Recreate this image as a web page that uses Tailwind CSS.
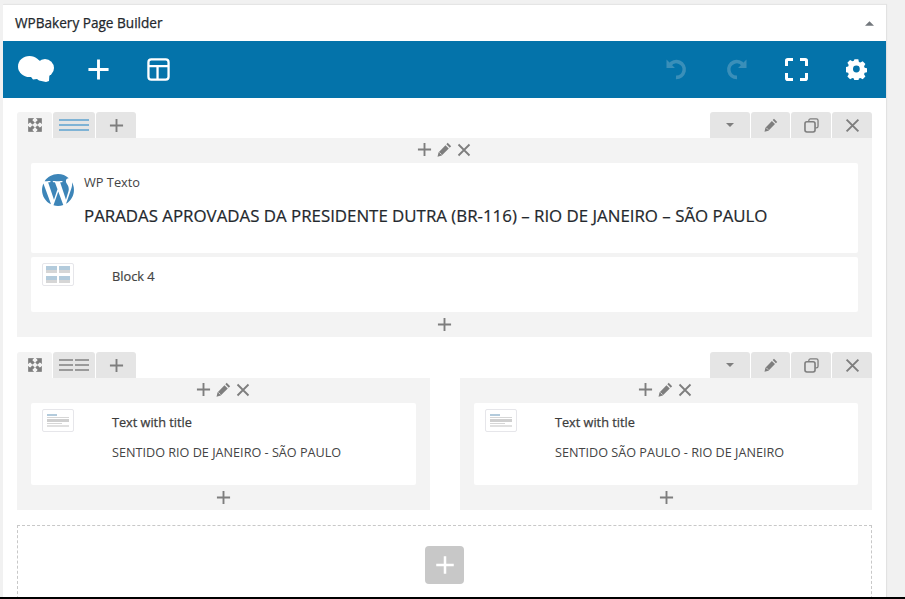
<!DOCTYPE html>
<html lang="en">
<head>
  <meta charset="UTF-8">
  <title>WPBakery Page Builder</title>
  <script src="https://cdn.jsdelivr.net/npm/@tailwindcss/browser@4"></script>
</head>
<body class="bg-[#f1f1f1] font-['Open_Sans','Noto_Sans',sans-serif] text-[#444]">
  <svg class="hidden">
    <symbol id="plus" viewBox="0 0 16 16"><path d="M8 1v14M1 8h14" fill="none" stroke="currentColor" stroke-width="2"/></symbol>
    <symbol id="cross" viewBox="0 0 14 14"><path d="M1.500 1.500l11 11M12.500 1.500l-11 11" fill="none" stroke="currentColor" stroke-width="1.800"/></symbol>
    <symbol id="pencil" viewBox="0 0 14 14"><path d="M10 .8l3.200 3.200-1.300 1.300-3.200-3.200zM7.900 3l3.100 3.100-6.600 6.600-3.900 1 .9-4z" fill="currentColor"/><path d="M2.300 9.800l1.900 1.900" stroke="#e5e5e5" stroke-width=".8"/></symbol>
    <symbol id="expand" viewBox="0 0 14 14"><path d="M.5.500h5L3.900 2.100 6.300 4.500 4.500 6.300 2.100 3.900.5 5.500zM13.500.500v5l-1.600-1.600L9.500 6.300 7.700 4.500l2.400-2.400L8.500.500zM.5 13.500v-5l1.600 1.600 2.400-2.400 1.800 1.800-2.400 2.400 1.600 1.600zM13.500 13.500h-5l1.600-1.600-2.400-2.400 1.800-1.800 2.400 2.400 1.600-1.600z" fill="currentColor" stroke="currentColor" stroke-width=".7"/></symbol>
    <symbol id="wp" viewBox="0 0 24 24"><path transform="translate(12 12) scale(1.110) translate(-12 -12)" d="M21.469 6.825c.84 1.537 1.318 3.300 1.318 5.175 0 3.979-2.156 7.456-5.363 9.325l3.295-9.527c.615-1.540.82-2.771.82-3.864 0-.405-.026-.78-.07-1.110m-7.981.105c.647-.03 1.232-.105 1.232-.105.582-.075.514-.93-.067-.899 0 0-1.755.135-2.880.135-1.064 0-2.850-.15-2.850-.15-.585-.03-.661.855-.075.885 0 0 .54.061 1.125.09l1.680 4.605-2.370 7.080L5.354 6.900c.649-.03 1.234-.1 1.234-.1.585-.075.516-.93-.065-.896 0 0-1.746.138-2.874.138-.2 0-.438-.008-.69-.015C4.911 3.150 8.235 1.215 12 1.215c2.809 0 5.365 1.072 7.286 2.833-.046-.003-.091-.009-.141-.009-1.060 0-1.812.923-1.812 1.914 0 .89.513 1.643 1.060 2.531.411.72.89 1.643.89 2.977 0 .915-.354 1.994-.821 3.479l-1.075 3.585-3.900-11.610.001.014zM12 22.784c-1.059 0-2.081-.153-3.048-.437l3.237-9.406 3.315 9.087c.024.053.05.101.078.149-1.120.393-2.325.609-3.582.609M1.211 12c0-1.564.336-3.050.935-4.390L7.290 21.709C3.694 19.960 1.212 16.271 1.211 12" fill="currentColor"/></symbol>
    <symbol id="dup" viewBox="0 0 14 14"><path d="M4.500 3.200V2.400C4.500 1.500 5.200.9 6 .9h5.500c.9 0 1.600.6 1.600 1.500v5.400c0 .9-.7 1.500-1.600 1.500h-.8" fill="none" stroke="currentColor" stroke-width="1.200"/><rect x=".9" y="3.500" width="9.400" height="9.600" rx="1.800" fill="none" stroke="currentColor" stroke-width="1.500"/></symbol>
    <symbol id="caret" viewBox="0 0 8 4"><path d="M0 0h8L4 4z" fill="currentColor"/></symbol>
  </svg>

  <div class="flex h-[599px] flex-col overflow-hidden">
    <div class="flex-1 overflow-hidden pt-[4px] pl-[3px] pr-[19px]">
      <div class="h-full border-t border-[#e5e5e5] bg-white shadow-[1px_0_1px_rgba(0,0,0,0.06)]">
        <!-- header -->
        <div class="flex h-[36px] items-center justify-between pl-[12px] pr-[12px]">
          <h2 class="text-[13.600px] font-normal text-[#23282d] [-webkit-text-stroke:0.25px]">WPBakery Page Builder</h2>
          <svg class="h-[5px] w-[9px] rotate-180 text-[#72777c]"><use href="#caret"/></svg>
        </div>

        <!-- blue toolbar -->
        <div class="flex h-[57px] items-center justify-between bg-[#0473aa] pl-[15px] pr-[19px] text-white">
          <div class="flex items-center">
            <svg class="h-[27px] w-[36px]" viewBox="0 0 36 27" fill="currentColor"><ellipse cx="11.500" cy="10.500" rx="11.500" ry="10.500"/><ellipse cx="18" cy="9" rx="7" ry="5"/><circle cx="27" cy="12" r="9"/><path d="M10 17l5 6.500 4-.5 2 1.500 7 1.500 3-1 .5-8z"/></svg>
            <svg class="ml-[33px] h-[23px] w-[23px]"><use href="#plus"/></svg>
            <svg class="ml-[37px] h-[23px] w-[23px]" viewBox="0 0 24 24"><rect x="1.500" y="1.500" width="21" height="21" rx="3" fill="none" stroke="currentColor" stroke-width="2.400"/><path d="M1.500 8.500h21M11 8.500v14" fill="none" stroke="currentColor" stroke-width="2.400"/></svg>
          </div>
          <div class="flex items-center">
            <svg class="h-[21px] w-[21px] text-[#3a8fb9]" viewBox="0 0 20 20"><path d="M.5.500v8h8z" fill="currentColor"/><path d="M3.500 6A7.500 7.500 0 1 1 9.500 17.500" fill="none" stroke="currentColor" stroke-width="3.400"/></svg>
            <svg class="ml-[39px] h-[21px] w-[21px] text-[#3a8fb9]" viewBox="0 0 20 20"><path d="M19.500.500v8h-8z" fill="currentColor"/><path d="M16.500 6A7.500 7.500 0 1 0 10.500 17.500" fill="none" stroke="currentColor" stroke-width="3.400"/></svg>
            <svg class="ml-[38px] h-[23px] w-[23px]" viewBox="0 0 23 23"><path d="M8 1.500H2.800c-.7 0-1.300.6-1.300 1.300V8M15 1.500h5.200c.7 0 1.300.6 1.300 1.300V8M8 21.500H2.800c-.7 0-1.300-.6-1.300-1.300V15M15 21.500h5.200c.7 0 1.300-.6 1.300-1.300V15" fill="none" stroke="currentColor" stroke-width="3"/></svg>
            <svg class="ml-[38px] h-[21px] w-[21px]" viewBox="0 0 21 21"><path fill-rule="evenodd" d="M8.500.5h4l.6 2.700 1.500.7 2.400-1.400 2.800 2.800-1.400 2.400.6 1.500 2.600.7v3.800l-2.600.7-.6 1.500 1.400 2.400-2.800 2.800-2.400-1.400-1.500.6-.6 2.700h-4l-.6-2.700-1.500-.6-2.400 1.400-2.800-2.800 1.400-2.400-.6-1.500-2.600-.7V8.600l2.600-.7.6-1.500-1.400-2.400 2.800-2.800 2.400 1.400 1.500-.7zM10.500 7a3.500 3.500 0 1 0 0 7 3.500 3.500 0 0 0 0-7z" fill="currentColor" transform="translate(.2 -.2) scale(.97)"/></svg>
          </div>
        </div>

        <div class="pl-[14px] pr-[14px] pt-[14px]">
          <!-- row 1 -->
          <div>
            <div class="flex h-[26px] justify-between">
              <div class="flex gap-px text-[#7e7e7e]">
                <div class="flex w-[35px] items-center justify-center rounded-t-[3px] bg-[#f3f3f3]"><svg class="h-[14px] w-[14px]"><use href="#expand"/></svg></div>
                <div class="flex w-[42px] flex-col items-center justify-center gap-[3px] rounded-t-[3px] bg-[#e5e5e5]">
                  <div class="h-[2px] w-[30px] bg-[#7fb3d5]"></div><div class="h-[2px] w-[30px] bg-[#7fb3d5]"></div><div class="h-[2px] w-[30px] bg-[#7fb3d5]"></div>
                </div>
                <div class="flex w-[40px] items-center justify-center rounded-t-[3px] bg-[#e5e5e5]"><svg class="h-[15px] w-[15px]"><use href="#plus"/></svg></div>
              </div>
              <div class="flex gap-px text-[#7e7e7e]">
                <div class="flex w-[40px] items-center justify-center rounded-t-[3px] bg-[#e5e5e5]"><svg class="h-[4px] w-[8px]"><use href="#caret"/></svg></div>
                <div class="flex w-[39px] items-center justify-center rounded-t-[3px] bg-[#e5e5e5]"><svg class="h-[14px] w-[14px]"><use href="#pencil"/></svg></div>
                <div class="flex w-[40px] items-center justify-center rounded-t-[3px] bg-[#e5e5e5]"><svg class="h-[15px] w-[15px]"><use href="#dup"/></svg></div>
                <div class="flex w-[40px] items-center justify-center rounded-t-[3px] bg-[#e5e5e5]"><svg class="h-[15px] w-[15px]"><use href="#cross"/></svg></div>
              </div>
            </div>
            <div class="bg-[#f3f3f3] px-[14px]">
              <div class="flex h-[25px] -translate-x-[1px] -translate-y-[1px] items-center justify-center gap-[5px] text-[#7e7e7e]">
                <svg class="h-[15px] w-[15px]"><use href="#plus"/></svg>
                <svg class="h-[15px] w-[15px]"><use href="#pencil"/></svg>
                <svg class="h-[14px] w-[14px]"><use href="#cross"/></svg>
              </div>
              <div class="flex h-[90px] rounded-[2px] bg-white pl-[11px] pt-[11px]">
                <svg class="h-[32px] w-[32px] text-[#3d85b8]"><use href="#wp"/></svg>
                <div class="ml-[10px]">
                  <p class="text-[12.800px] leading-[17px] text-[#444]">WP Texto</p>
                  <p class="mt-[14px] text-[16.850px] leading-[22px] text-[#23282d] [-webkit-text-stroke:0.2px]">PARADAS APROVADAS DA PRESIDENTE DUTRA (BR-116) – RIO DE JANEIRO – SÃO PAULO</p>
                </div>
              </div>
              <div class="mt-[4px] flex h-[55px] rounded-[2px] bg-white pl-[11px] pt-[6px]">
                <div class="grid h-[23px] w-[32px] grid-cols-2 gap-x-[2px] gap-y-[3px] rounded-[2px] border border-[#e6e6ea] px-[3px] py-[2px]">
                  <div class="border-b-[3px] border-[#d6d6d6] bg-[#b3cbdc]"></div><div class="border-b-[3px] border-[#d6d6d6] bg-[#b3cbdc]"></div>
                  <div class="border-b-[3px] border-[#d6d6d6] bg-[#b3cbdc]"></div><div class="border-b-[3px] border-[#d6d6d6] bg-[#b3cbdc]"></div>
                </div>
                <p class="ml-[38px] text-[12.800px] leading-[27px] text-[#444] [-webkit-text-stroke:0.2px]">Block 4</p>
              </div>
              <div class="flex h-[25px] items-center justify-center text-[#7e7e7e]"><svg class="h-[15px] w-[15px]"><use href="#plus"/></svg></div>
            </div>
          </div>

          <!-- row 2 -->
          <div class="mt-[15px]">
            <div class="flex h-[26px] justify-between">
              <div class="flex gap-px text-[#7e7e7e]">
                <div class="flex w-[35px] items-center justify-center rounded-t-[3px] bg-[#f3f3f3]"><svg class="h-[14px] w-[14px]"><use href="#expand"/></svg></div>
                <div class="flex w-[42px] items-center justify-center gap-[2px] rounded-t-[3px] bg-[#e5e5e5]">
                  <div class="flex w-[14px] flex-col gap-[3px]"><div class="h-[2px] bg-[#9a9a9a]"></div><div class="h-[2px] bg-[#9a9a9a]"></div><div class="h-[2px] bg-[#9a9a9a]"></div></div>
                  <div class="flex w-[14px] flex-col gap-[3px]"><div class="h-[2px] bg-[#9a9a9a]"></div><div class="h-[2px] bg-[#9a9a9a]"></div><div class="h-[2px] bg-[#9a9a9a]"></div></div>
                </div>
                <div class="flex w-[40px] items-center justify-center rounded-t-[3px] bg-[#e5e5e5]"><svg class="h-[15px] w-[15px]"><use href="#plus"/></svg></div>
              </div>
              <div class="flex gap-px text-[#7e7e7e]">
                <div class="flex w-[40px] items-center justify-center rounded-t-[3px] bg-[#e5e5e5]"><svg class="h-[4px] w-[8px]"><use href="#caret"/></svg></div>
                <div class="flex w-[39px] items-center justify-center rounded-t-[3px] bg-[#e5e5e5]"><svg class="h-[14px] w-[14px]"><use href="#pencil"/></svg></div>
                <div class="flex w-[40px] items-center justify-center rounded-t-[3px] bg-[#e5e5e5]"><svg class="h-[15px] w-[15px]"><use href="#dup"/></svg></div>
                <div class="flex w-[40px] items-center justify-center rounded-t-[3px] bg-[#e5e5e5]"><svg class="h-[15px] w-[15px]"><use href="#cross"/></svg></div>
              </div>
            </div>
            <div class="grid grid-cols-[413px_412px] justify-between">
              <div class="bg-[#f3f3f3] px-[14px]">
                <div class="flex h-[25px] -translate-x-[1px] -translate-y-[1px] items-center justify-center gap-[5px] text-[#7e7e7e]">
                  <svg class="h-[15px] w-[15px]"><use href="#plus"/></svg>
                  <svg class="h-[15px] w-[15px]"><use href="#pencil"/></svg>
                  <svg class="h-[14px] w-[14px]"><use href="#cross"/></svg>
                </div>
                <div class="flex h-[82px] rounded-[2px] bg-white pl-[11px] pt-[6px]">
                  <div class="flex h-[23px] w-[32px] flex-col gap-[1px] rounded-[2px] border border-[#e6e6ea] px-[4px] py-[4px]">
                    <div class="h-[2px] w-[10px] bg-[#b3cbdc]"></div><div class="h-[2px] bg-[#d6d6d6]"></div><div class="h-[3px] bg-[#cfcfcf]"></div><div class="h-[2px] w-[15px] bg-[#d6d6d6]"></div><div class="h-[2px] bg-[#e0e0e0]"></div>
                  </div>
                  <div class="ml-[38px]">
                    <p class="text-[12.700px] leading-[27px] text-[#3c3c3c] [-webkit-text-stroke:0.25px]">Text with title</p>
                    <p class="mt-[3px] text-[12.650px] leading-[27px] text-[#444]">SENTIDO RIO DE JANEIRO - SÃO PAULO</p>
                  </div>
                </div>
                <div class="flex h-[25px] items-center justify-center text-[#7e7e7e]"><svg class="h-[15px] w-[15px]"><use href="#plus"/></svg></div>
              </div>
              <div class="bg-[#f3f3f3] px-[14px]">
                <div class="flex h-[25px] -translate-x-[1px] -translate-y-[1px] items-center justify-center gap-[5px] text-[#7e7e7e]">
                  <svg class="h-[15px] w-[15px]"><use href="#plus"/></svg>
                  <svg class="h-[15px] w-[15px]"><use href="#pencil"/></svg>
                  <svg class="h-[14px] w-[14px]"><use href="#cross"/></svg>
                </div>
                <div class="flex h-[82px] rounded-[2px] bg-white pl-[11px] pt-[6px]">
                  <div class="flex h-[23px] w-[32px] flex-col gap-[1px] rounded-[2px] border border-[#e6e6ea] px-[4px] py-[4px]">
                    <div class="h-[2px] w-[10px] bg-[#b3cbdc]"></div><div class="h-[2px] bg-[#d6d6d6]"></div><div class="h-[3px] bg-[#cfcfcf]"></div><div class="h-[2px] w-[15px] bg-[#d6d6d6]"></div><div class="h-[2px] bg-[#e0e0e0]"></div>
                  </div>
                  <div class="ml-[38px]">
                    <p class="text-[12.700px] leading-[27px] text-[#3c3c3c] [-webkit-text-stroke:0.25px]">Text with title</p>
                    <p class="mt-[3px] text-[12.650px] leading-[27px] text-[#444]">SENTIDO SÃO PAULO - RIO DE JANEIRO</p>
                  </div>
                </div>
                <div class="flex h-[25px] items-center justify-center text-[#7e7e7e]"><svg class="h-[15px] w-[15px]"><use href="#plus"/></svg></div>
              </div>
            </div>
          </div>

          <!-- add new row -->
          <div class="mt-[15px] flex h-[120px] justify-center border border-dashed border-[#c8c8c8] pt-[20px]">
            <div class="flex h-[38px] w-[39px] items-center justify-center rounded-[4px] bg-[#c8c8c8] text-white"><svg class="h-[20px] w-[20px]"><use href="#plus"/></svg></div>
          </div>
        </div>
      </div>
    </div>
    <div class="h-[2px] bg-black"></div>
  </div>
</body>
</html>
